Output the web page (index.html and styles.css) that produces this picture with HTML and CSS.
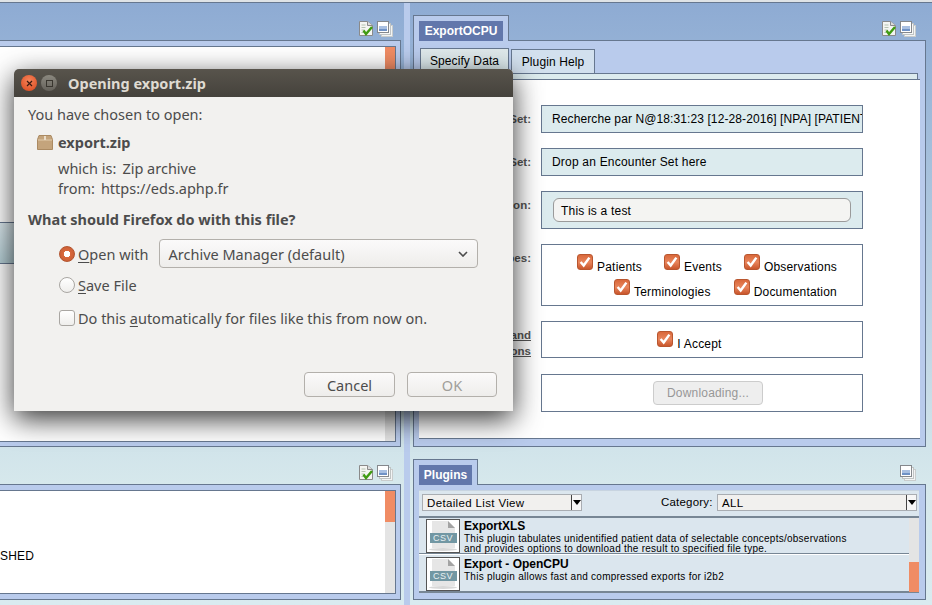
FILE: index.html
```html
<!DOCTYPE html>
<html>

	<head>
		<meta charset="UTF-8">
		<title>Opening export.zip</title>
		<link rel="stylesheet" href="styles.css">
	</head>

	<body>
		<svg class="defs" width="0" height="0">
			<symbol id="icoDoc" viewBox="0 0 14 15">
				<path d="M.5.5h8l5 4v10H.5z" fill="#f4f5f2" stroke="#8a8a8a" />
				<path d="M8.5.5v4h5" fill="#dcdcdc" stroke="#8a8a8a" />
				<path d="M2.5 4h4M2.5 6.5h4M2.5 9h3M2.5 11.5h3" stroke="#b5c2b0" />
				<path d="M4.5 9.5l2.5 3.500 6-7" fill="none" stroke="#3f9b12" stroke-width="2.4" />
			</symbol>
			<symbol id="icoWin" viewBox="0 0 16 16">
				<rect x="4.5" y="4.5" width="11" height="11" fill="#f2f4f4" stroke="#c9cccc" />
				<rect x="2.5" y="2.5" width="11" height="11" fill="#f7f8f8" stroke="#c0c4c4" />
				<rect x=".5" y=".5" width="11" height="11" fill="#fff" stroke="#85888c" />
				<rect x="2" y="5" width="8" height="5" fill="#a9c0e2" />
				<rect x="2" y="8" width="8" height="2" fill="#6f92c6" />
			</symbol>
			<symbol id="icoCheck" viewBox="0 0 16 16">
				<path d="M3 8l3.500 4 6.500-9" fill="none" stroke="#fff" stroke-width="2.8" />
			</symbol>
		</svg>

		<div class="app">
			<!-- left column -->
			<div class="col colLeft">
				<div class="head">
					<div class="icons">
						<svg class="ico14"><use href="#icoDoc" /></svg>
						<svg class="ico16"><use href="#icoWin" /></svg>
					</div>
				</div>
				<div class="panel panelBig">
					<div class="inner innerBig">
						<div class="list">
							<div class="hiRow"></div>
						</div>
						<div class="scroll">
							<div class="thumb thumbTop"></div>
						</div>
					</div>
				</div>
				<div class="head">
					<div class="icons">
						<svg class="ico14"><use href="#icoDoc" /></svg>
						<svg class="ico16"><use href="#icoWin" /></svg>
					</div>
				</div>
				<div class="panel panelSmall">
					<div class="inner innerSmall">
						<div class="list">
							<div class="logText">SHED</div>
						</div>
						<div class="scroll">
							<div class="thumb thumbLog"></div>
						</div>
					</div>
				</div>
			</div>

			<div class="split"></div>

			<!-- right column -->
			<div class="col colRight">
				<div class="head">
					<div class="tab"><div class="tabName">ExportOCPU</div></div>
					<div class="icons">
						<svg class="ico14"><use href="#icoDoc" /></svg>
						<svg class="ico16"><use href="#icoWin" /></svg>
					</div>
				</div>
				<div class="panel panelBig">
					<div class="subTabs">
						<div class="subTab subTabOn">Specify Data</div>
						<div class="subTab">Plugin Help</div>
					</div>
					<div class="band"></div>
					<div class="form">
						<div class="row">
							<div class="lbl">Patient Set:</div>
							<div class="field fieldDrop fieldLong h28">Recherche par N@18:31:23 [12-28-2016] [NPA] [PATIENT</div>
						</div>
						<div class="row">
							<div class="lbl">Encounter Set:</div>
							<div class="field fieldDrop h28">Drop an Encounter Set here</div>
						</div>
						<div class="row">
							<div class="lbl">Description:</div>
							<div class="field fieldDrop h38">
								<div class="textBox">This is a test</div>
							</div>
						</div>
						<div class="row">
							<div class="lbl">Data Types:</div>
							<div class="field checks h62">
								<div class="checkRow">
									<div class="check"><svg class="box"><use href="#icoCheck" /></svg><span>Patients</span></div>
									<div class="check"><svg class="box"><use href="#icoCheck" /></svg><span>Events</span></div>
									<div class="check"><svg class="box"><use href="#icoCheck" /></svg><span>Observations</span></div>
								</div>
								<div class="checkRow">
									<div class="check"><svg class="box"><use href="#icoCheck" /></svg><span>Terminologies</span></div>
									<div class="check"><svg class="box"><use href="#icoCheck" /></svg><span>Documentation</span></div>
								</div>
							</div>
						</div>
						<div class="row">
							<div class="lbl lblLink">Terms and<br>Conditions</div>
							<div class="field checks h37">
								<div class="checkRow checkMid">
									<div class="check"><svg class="box"><use href="#icoCheck" /></svg><span>I Accept</span></div>
								</div>
							</div>
						</div>
						<div class="row">
							<div class="lbl"></div>
							<div class="field fieldBtn h38">
								<div class="btnOff">Downloading...</div>
							</div>
						</div>
					</div>
				</div>
				<div class="head">
					<div class="tab tabPlugins"><div class="tabName">Plugins</div></div>
					<div class="icons">
						<svg class="ico16"><use href="#icoWin" /></svg>
					</div>
				</div>
				<div class="panel panelSmall">
					<div class="bar">
						<div class="sel selView">Detailed List View<span class="selBtn"></span></div>
						<div class="catLbl">Category:</div>
						<div class="sel selCat">ALL<span class="selBtn"></span></div>
					</div>
					<div class="plugins">
						<div class="pluginList">
							<div class="plugin">
								<div class="thumbBox">
									<svg class="csv" viewBox="0 0 32 32">
										<path d="M5 1h16l7 7v20H5z" fill="#e6e6e6" />
										<path d="M21 1l7 7h-7z" fill="#a3a3a3" />
										<ellipse cx="16" cy="29.5" rx="14" ry="1.5" fill="#d8d8d8" />
										<rect x="3" y="13" width="27" height="10" fill="#7297a3" />
										<text x="16" y="21" class="csvText">CSV</text>
									</svg>
								</div>
								<div class="pluginText">
									<div class="pluginName">ExportXLS</div>
									<div class="pluginDesc">This plugin tabulates unidentified patient data of selectable concepts/observations<br>and provides options to download the result to specified file type.</div>
								</div>
							</div>
							<div class="plugin">
								<div class="thumbBox">
									<svg class="csv" viewBox="0 0 32 32">
										<path d="M5 1h16l7 7v20H5z" fill="#e6e6e6" />
										<path d="M21 1l7 7h-7z" fill="#a3a3a3" />
										<ellipse cx="16" cy="29.5" rx="14" ry="1.5" fill="#d8d8d8" />
										<rect x="3" y="13" width="27" height="10" fill="#7297a3" />
										<text x="16" y="21" class="csvText">CSV</text>
									</svg>
								</div>
								<div class="pluginText">
									<div class="pluginName">Export - OpenCPU</div>
									<div class="pluginDesc">This plugin allows fast and compressed exports for i2b2</div>
								</div>
							</div>
						</div>
						<div class="scroll">
							<div class="thumb thumbPlugins"></div>
						</div>
					</div>
				</div>
			</div>
		</div>

		<!-- firefox download dialog -->
		<div class="dialog">
			<div class="titleBar">
				<div class="winBtn winClose">
					<svg width="7" height="7" viewBox="0 0 7 7"><path d="M1 1l5 5M6 1l-5 5" stroke="#3a1a10" stroke-width="1.2" /></svg>
				</div>
				<div class="winBtn winMax"><span class="winSquare"></span></div>
				<div class="titleText">Opening export.zip</div>
			</div>
			<div class="dlgBody">
				<div class="chosen">You have chosen to open:</div>
				<div class="fileLine">
					<svg class="zip" viewBox="0 0 16 15">
						<path d="M2 .5h12l1.5 4v10H.5v-10z" fill="#c4a47c" stroke="#ab8a62" />
						<path d="M1 5h14" stroke="#e1cbac" />
						<path d="M7 1h2v4H7z" fill="#e9dcc8" />
					</svg>
					<b>export.zip</b>
				</div>
				<div class="fileInfo">
					<div>which is:<span class="val">Zip archive</span></div>
					<div>from:<span class="val">https://eds.aphp.fr</span></div>
				</div>
				<div class="question">What should Firefox do with this file?</div>
				<div class="optRow">
					<span class="radio radioOn"></span>
					<span class="optText"><u>O</u>pen with</span>
					<div class="appSelect">
						Archive Manager (default)
						<svg width="10" height="6" viewBox="0 0 10 6"><path d="M1 1l4 4 4-4" fill="none" stroke="#4c4c4c" stroke-width="1.6" /></svg>
					</div>
				</div>
				<div class="optRow optSave">
					<span class="radio"></span>
					<span class="optText"><u>S</u>ave File</span>
				</div>
				<div class="optRow optAuto">
					<span class="tick"></span>
					<span class="optText">Do this <u>a</u>utomatically for files like this from now on.</span>
				</div>
				<div class="dlgBtns">
					<div class="dlgBtn">Cancel</div>
					<div class="dlgBtn dlgBtnOff">OK</div>
				</div>
			</div>
		</div>
	</body>

</html>
```
FILE: styles.css
```css
* {
	padding: 0;
	margin: 0;
	box-sizing: border-box;
}

body {
	width: 932px;
	height: 605px;
	overflow: hidden;
	background: #dfe3e6;
	font-family: "Liberation Sans", Arial, sans-serif;
	font-size: 12px;
	letter-spacing: .2px;
	color: #000;
}

.defs {
	display: block;
}

.csvText {
	font-family: "Liberation Sans", Arial, sans-serif;
	font-size: 9px;
	fill: #e8f0f2;
	text-anchor: middle;
	letter-spacing: .5px;
}

.app {
	display: grid;
	grid-template-columns: 404px 6px 522px;
	height: 603px;
	margin-top: 2px;
	border-top: 1px solid #66778f;
	background: linear-gradient(#8eabd3 0, #9db9d9 100px, #d6e8ec 480px, #d9ebf0 100%);
}

.col {
	display: flex;
	flex-direction: column;
}

.colLeft {
	padding-right: 3px;
}

.colRight {
	padding-left: 3px;
	padding-right: 6px;
}

.split {
	background: #b9cbec;
}

.head {
	height: 37px;
	display: flex;
	justify-content: space-between;
	align-items: flex-end;
}

.icons {
	display: flex;
	gap: 4px;
	margin-left: auto;
	margin-bottom: 3px;
	padding-right: 8px;
}

.colRight .icons {
	padding-right: 10px;
}

.ico14 {
	width: 14px;
	height: 15px;
}

.ico16 {
	width: 16px;
	height: 16px;
}

.tab {
	width: 96px;
	height: 26px;
	margin-bottom: -1px;
	padding: 5px 5px 0;
	background: #b9cbec;
	border: 1px solid #66778f;
	border-bottom: 0;
	position: relative;
}

.tabPlugins {
	width: 65px;
}

.tabName {
	height: 20px;
	line-height: 20px;
	background: #6277ab;
	color: #fff;
	font-weight: bold;
	letter-spacing: 0;
	text-align: center;
}

.panel {
	background: #b9cbec;
	border: 1px solid #66778f;
}

.colLeft .panel {
	border-left: 0;
	padding: 5px 4px 5px 0;
}

.panelBig {
	height: 407px;
}

.panelSmall {
	height: 116px;
}

.inner {
	display: flex;
	background: #fff;
	border: 1px solid #66778f;
	border-left: 0;
}

.innerBig {
	height: 396px;
}

.innerSmall {
	height: 104px;
}

.list {
	flex: 1;
}

.hiRow {
	height: 42px;
	margin-top: 175px;
	background: linear-gradient(#dce9ee, #b5cfd6);
	border-top: 1px solid #66778f;
	border-bottom: 1px solid #66778f;
}

.logText {
	padding-top: 58px;
}

.scroll {
	width: 10px;
	background: #e4e4e4;
}

.thumb {
	background: #f08c64;
}

.thumbTop {
	height: 110px;
}

.thumbLog {
	height: 31px;
}

.thumbPlugins {
	height: 30px;
	margin-top: 44px;
}

/* plugin form */
.subTabs {
	display: flex;
	align-items: flex-end;
	gap: 2px;
	height: 32px;
	padding-left: 6px;
}

.subTab {
	height: 24px;
	width: 84px;
	line-height: 24px;
	letter-spacing: .1px;
	text-align: center;
	background: #d2e0ee;
	border: 1px solid #66778f;
	border-bottom: 0;
}

.subTabOn {
	width: 89px;
	height: 25px;
	background: linear-gradient(#dfe8ea, #dcebee);
}

.band {
	height: 6px;
	width: 499px;
	margin-left: 5px;
	background: #dcebee;
	border: 1px solid #66778f;
	border-bottom: 0;
}

.form {
	height: 360px;
	width: 501px;
	margin-left: 5px;
	padding-top: 25px;
	background: #fff;
	border-top: 1px solid #66778f;
	border-bottom: 1px solid #66778f;
	display: flex;
	flex-direction: column;
	gap: 15px;
}

.row {
	display: flex;
	gap: 10px;
}

.lbl {
	width: 112px;
	padding-top: 8px;
	text-align: right;
	font-size: 11.5px;
	font-weight: bold;
	letter-spacing: 0;
	color: #555;
	white-space: nowrap;
}

.lblLink {
	padding-top: 6px;
	line-height: 16px;
	text-decoration: underline;
}

.field {
	width: 322px;
	border: 1px solid #66778f;
}

.h28 {
	height: 28px;
}

.h37 {
	height: 37px;
}

.h38 {
	height: 38px;
}

.h62 {
	height: 62px;
}

.fieldDrop {
	padding: 6px 0 0 10px;
	background: #dcebee;
	white-space: nowrap;
	overflow: hidden;
}

.fieldLong {
	letter-spacing: .1px;
}

.textBox {
	width: 298px;
	height: 24px;
	margin-left: 1px;
	padding-left: 7px;
	line-height: 24px;
	background: #f4f4f2;
	border: 1px solid #9a9a9a;
	border-radius: 6px;
}

.checks {
	padding: 9px 25px 0 0;
}

.checkRow {
	display: flex;
	justify-content: flex-end;
	gap: 23px;
	margin-bottom: 5px;
}

.checkRow:first-child {
	gap: 22px;
}

.checkMid {
	justify-content: center;
}

.check {
	display: flex;
	gap: 4px;
}

.check span {
	padding-top: 6px;
	line-height: 14px;
}

.box {
	width: 16px;
	height: 16px;
	background: linear-gradient(#d9683b, #e8855c 50%, #c9562c);
	border: 1px solid #b9562f;
	border-radius: 3px;
}

.fieldBtn {
	display: flex;
	justify-content: center;
	padding: 6px 0 0 12px;
}

.btnOff {
	width: 110px;
	height: 24px;
	line-height: 22px;
	text-align: center;
	color: #979797;
	background: #eee;
	border: 1px solid #ccc;
	border-radius: 4px;
}

/* plugins list */
.bar {
	height: 28px;
	margin: 5px 6px 0 5px;
	padding: 3px 0 0 3px;
	display: flex;
	background: #dbe6ee;
	border-top: 1px solid #c8d4e0;
	border-bottom: 2px solid #778694;
}

.sel {
	height: 17px;
	padding-left: 4px;
	line-height: 16px;
	position: relative;
	background: #f1f0ee;
	border: 1px solid #a9adb2;
	font-size: 11.5px;
	letter-spacing: .35px;
}

.selView {
	width: 160px;
}

.catLbl {
	width: 56px;
	margin-left: 79px;
	line-height: 17px;
	font-size: 11.5px;
}

.selCat {
	width: 200px;
}

.selBtn {
	position: absolute;
	right: 0;
	top: 0;
	width: 10px;
	height: 15px;
	background: #f6f6f6;
	border-left: 1px solid #444;
}

.selBtn::after {
	content: "";
	position: absolute;
	left: 1px;
	top: 5px;
	border: 4px solid transparent;
	border-top: 5px solid #000;
}

.plugins {
	display: flex;
	height: 75px;
	margin: 0 6px 0 5px;
	background: #dbe6ee;
	border-bottom: 2px solid #778694;
}

.pluginList {
	flex: 1;
}

.plugin {
	height: 37px;
	padding: 1px 0 0 7px;
	display: flex;
	gap: 4px;
	border-bottom: 1px solid #fff;
	box-shadow: inset 0 -1px 0 #778694;
}

.plugin:last-child {
	border-bottom: 0;
	box-shadow: none;
	padding-top: 2px;
}

.thumbBox {
	flex: none;
	width: 34px;
	height: 34px;
	background: #fff;
	border: 1px solid #555;
}

.csv {
	width: 32px;
	height: 32px;
	display: block;
}

.pluginText {
	padding-top: 1px;
}

.pluginName {
	font-weight: bold;
	letter-spacing: 0;
	line-height: 13px;
}

.pluginDesc {
	font-size: 10px;
	line-height: 10px;
	letter-spacing: .25px;
	margin-top: 1px;
}

/* dialog */
.dialog {
	position: absolute;
	left: 14px;
	top: 69px;
	width: 499px;
	height: 342px;
	background: #f2f1ef;
	border-radius: 5px 5px 0 0;
	box-shadow: 0 8px 28px rgba(0, 0, 0, .8);
	font-family: "Noto Sans", sans-serif;
	font-size: 14.5px;
	letter-spacing: 0;
	color: #4c4c4c;
}

.titleBar {
	height: 28px;
	padding-left: 7px;
	display: flex;
	align-items: center;
	gap: 4px;
	background: linear-gradient(#58544c, #45423c);
	border-radius: 5px 5px 0 0;
}

.winBtn {
	width: 16px;
	height: 16px;
	border-radius: 50%;
	display: flex;
	align-items: center;
	justify-content: center;
}

.winClose {
	background: radial-gradient(circle at 50% 35%, #f7845a, #d8461b);
}

.winMax {
	background: linear-gradient(#8b887f, #65625b);
}

.winSquare {
	width: 7px;
	height: 7px;
	border: 1px solid #39362f;
}

.titleText {
	margin-left: 7px;
	color: #dfdbd2;
	font-weight: bold;
}

.dlgBody {
	padding: 7px 14px 0;
}

.chosen {
	line-height: 20px;
}

.fileLine {
	display: flex;
	align-items: center;
	gap: 5px;
	height: 20px;
	margin: 8px 0 0 9px;
}

.zip {
	width: 16px;
	height: 15px;
}

.fileInfo {
	margin: 6px 0 0 30px;
	line-height: 20px;
}

.val {
	margin-left: 6px;
}

.question {
	margin-top: 11px;
	font-weight: bold;
	line-height: 20px;
}

.optRow {
	display: flex;
	align-items: center;
	margin: 10px 0 0 31px;
	height: 29px;
}

.optSave {
	margin-top: 2px;
}

.optAuto {
	margin-top: 4px;
}

.radio {
	width: 16px;
	height: 16px;
	margin-right: 3px;
	border-radius: 50%;
	border: 1px solid #a9a6a2;
	background: linear-gradient(#fff, #efeeec);
}

.radioOn {
	background: radial-gradient(circle, #fff 0 3px, #d8683c 3.5px, #c65a30);
	border-color: #b3552f;
}

.tick {
	width: 16px;
	height: 16px;
	margin-right: 3px;
	border-radius: 3px;
	border: 1px solid #a9a6a2;
	background: linear-gradient(#fff, #efeeec);
}

.optText u {
	text-underline-offset: 2px;
}

.appSelect {
	width: 319px;
	height: 29px;
	margin-left: 10px;
	padding: 0 9px;
	display: flex;
	align-items: center;
	justify-content: space-between;
	background: linear-gradient(#fbfafa, #eeedeb);
	border: 1px solid #b3b0ab;
	border-radius: 4px;
}

.dlgBtns {
	display: flex;
	justify-content: flex-end;
	gap: 12px;
	margin-top: 40px;
	padding-right: 2px;
}

.dlgBtn {
	width: 91px;
	height: 25px;
	line-height: 24px;
	text-align: center;
	background: linear-gradient(#fbfafa, #eeedeb);
	border: 1px solid #b3b0ab;
	border-radius: 4px;
}

.dlgBtnOff {
	width: 90px;
	color: #a09e9a;
}
```
